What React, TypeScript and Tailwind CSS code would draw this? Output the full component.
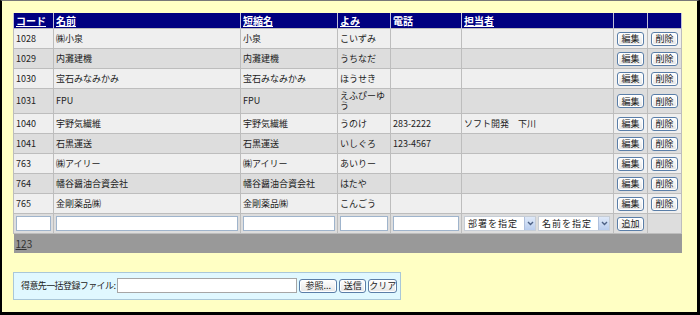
import React from 'react';

const font = { fontFamily: '"MS PGothic", "Noto Sans CJK JP", sans-serif' };

interface Customer {
  code: string;
  name: string;
  short: string;
  yomi: string;
  tel: string;
  tantou: string;
}

const customers: Customer[] = [
  { code: '1028', name: '㈱小泉', short: '小泉', yomi: 'こいずみ', tel: '', tantou: '' },
  { code: '1029', name: '内灘建機', short: '内灘建機', yomi: 'うちなだ', tel: '', tantou: '' },
  { code: '1030', name: '宝石みなみかみ', short: '宝石みなみかみ', yomi: 'ほうせき', tel: '', tantou: '' },
  { code: '1031', name: 'FPU', short: 'FPU', yomi: 'えふぴーゆう', tel: '', tantou: '' },
  { code: '1040', name: '宇野気繊維', short: '宇野気繊維', yomi: 'うのけ', tel: '283-2222', tantou: 'ソフト開発　下川' },
  { code: '1041', name: '石黒運送', short: '石黒運送', yomi: 'いしぐろ', tel: '123-4567', tantou: '' },
  { code: '763', name: '㈱アイリー', short: '㈱アイリー', yomi: 'あいりー', tel: '', tantou: '' },
  { code: '764', name: '幡谷醤油合資会社', short: '幡谷醤油合資会社', yomi: 'はたや', tel: '', tantou: '' },
  { code: '765', name: '金剛薬品㈱', short: '金剛薬品㈱', yomi: 'こんごう', tel: '', tantou: '' },
];

function Btn({ label, className = '' }: { label: string; className?: string }) {
  return (
    <span
      className={`inline-flex shrink-0 whitespace-nowrap items-center justify-center h-[14px] px-[2px] rounded-[3px] border border-[#5a7ea8] bg-gradient-to-b from-white to-[#e6e6e6] text-[9px] leading-none text-[#222] shadow-[inset_0_0_0_1px_#fff] ${className}`}
    >
      {label}
    </span>
  );
}

function TextBox({ className = '' }: { className?: string }) {
  return <div className={`h-[15px] bg-white border border-[#9fb4cc] ${className}`} />;
}

function FakeSelect({ label }: { label: string }) {
  return (
    <div className="flex items-center h-[15px] w-[72px] bg-white border border-[#c6cdd6] text-[9px] text-[#222]">
      <span className="flex-1 pl-[3px] tracking-[1px] whitespace-nowrap">{label}</span>
      <span className="w-[11px] h-[13px] flex items-center justify-center bg-gradient-to-b from-[#dfe9f8] to-[#b9cdee] border-l border-[#b0c0dc]">
        <svg width="7" height="5" viewBox="0 0 7 5">
          <path d="M1 1 L3.5 3.5 L6 1" stroke="#4d6185" strokeWidth="1.4" fill="none" />
        </svg>
      </span>
    </div>
  );
}

export default function App() {
  const th = 'text-left font-bold text-white px-[2px] border-x border-[#c0c0d8] text-[10px]';
  const td = 'border border-[#bdbdbd] px-[2px] align-middle';

  return (
    <div
      className="w-[700px] h-[315px] bg-[#ffffc4] border-l-2 border-t border-r-[3px] border-b-[3px] border-t-[#777] border-l-black border-r-black border-b-black pt-[12px] pl-[11px]"
      style={font}
    >
      <table className="table-fixed border-collapse w-[668px] text-[9px] text-[#222]">
        <colgroup>
          <col className="w-[40px]" />
          <col className="w-[187px]" />
          <col className="w-[97px]" />
          <col className="w-[53px]" />
          <col className="w-[71px]" />
          <col className="w-[152px]" />
          <col className="w-[34px]" />
          <col className="w-[34px]" />
        </colgroup>
        <thead>
          <tr className="h-[15px] bg-[#000080]">
            <th className={th}><span className="underline">コード</span></th>
            <th className={th}><span className="underline">名前</span></th>
            <th className={th}><span className="underline">短縮名</span></th>
            <th className={th}><span className="underline">よみ</span></th>
            <th className={th}>電話</th>
            <th className={th}><span className="underline">担当者</span></th>
            <th className={th}></th>
            <th className={th}></th>
          </tr>
        </thead>
        <tbody>
          {customers.map((c, i) => (
            <tr
              key={c.code}
              className={`${c.yomi.length > 5 ? 'h-[25px]' : 'h-[20px]'} ${i % 2 === 0 ? 'bg-[#efefef]' : 'bg-[#dddddd]'}`}
            >
              <td className={td}>{c.code}</td>
              <td className={td}>{c.name}</td>
              <td className={td}>{c.short}</td>
              <td className={`${td} leading-[10px] break-all`}>{c.yomi}</td>
              <td className={td}>{c.tel}</td>
              <td className={td}>{c.tantou}</td>
              <td className={`${td} text-center`}><Btn label="編集" className="w-[27px]" /></td>
              <td className={`${td} text-center`}><Btn label="削除" className="w-[27px]" /></td>
            </tr>
          ))}
          <tr className="h-[20px] bg-[#dddddd]">
            <td className={td}><TextBox /></td>
            <td className={td}><TextBox /></td>
            <td className={td}><TextBox /></td>
            <td className={td}><TextBox /></td>
            <td className={td}><TextBox /></td>
            <td className={td}>
              <div className="flex gap-[2px]">
                <FakeSelect label="部署を指定" />
                <FakeSelect label="名前を指定" />
              </div>
            </td>
            <td className={`${td} text-center`}><Btn label="追加" className="w-[27px]" /></td>
            <td className={td}></td>
          </tr>
          <tr className="h-[19px] bg-[#999999]">
            <td colSpan={8} className="px-[2px] text-[10px] text-[#333]">
              <span className="underline">1</span>
              <span className="underline">2</span>
              <span>3</span>
            </td>
          </tr>
        </tbody>
      </table>

      <div className="mt-[19px] w-[388px] h-[28px] flex items-center gap-[2px] pl-[7px] bg-[#e0f8ff] border border-[#a9c7d8] text-[9px] text-[#222]">
        <span className="whitespace-nowrap shrink-0 tracking-[-0.6px]">得意先一括登録ファイル:</span>
        <TextBox className="w-[180px] h-[14px] shrink-0 border-[#a6a6a6]" />
        <Btn label="参照..." className="w-[38px]" />
        <Btn label="送信" className="w-[27px]" />
        <Btn label="クリア" className="w-[29px]" />
      </div>
    </div>
  );
}
